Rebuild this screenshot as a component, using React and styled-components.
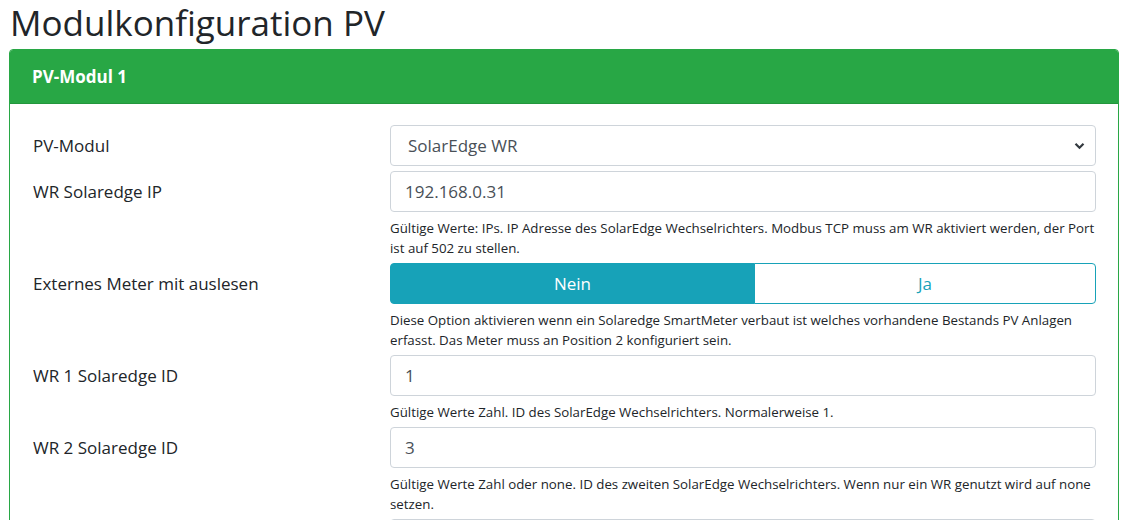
import React, { useState } from 'react'
import styled, { createGlobalStyle } from 'styled-components'

const GlobalStyle = createGlobalStyle`
    html, body {
        margin: 0;
        padding: 0;
        background: #fff;
    }
    body {
        font-family: "Open Sans", "Noto Sans", sans-serif;
        font-size: 17px;
        color: #212529;
    }
    * {
        box-sizing: border-box;
    }
`

const Seite = styled.div`
    padding: 2px 20px 0 9px;
`
const Titel = styled.h1`
    margin: 0 0 5px 1px;
    font-size: 35px;
    font-weight: 500;
    line-height: 42px;
    color: #212529;
`
const Karte = styled.div`
    border: 1px solid #28a745;
    border-radius: 4px;
    overflow: hidden;
`
const KartenKopf = styled.div`
    background: #28a745;
    color: #fff;
    font-weight: 700;
    font-size: 17px;
    height: 54px;
    display: flex;
    align-items: center;
    padding: 0 22px;
    border-bottom: 1px solid #23963d;
`
const KartenInhalt = styled.div`
    padding: 21px 22px 0 22px;
    display: flex;
    flex-direction: column;
    gap: 5px;
`
const Zeile = styled.div`
    display: grid;
    grid-template-columns: 358px 1fr;
`
const Beschriftung = styled.label`
    padding-top: 9px;
    line-height: 24px;
    padding-left: 1px;
`
const Feld = styled.div`
    display: flex;
    flex-direction: column;
`
const Eingabe = styled.input`
    height: 41px;
    width: 100%;
    border: 1px solid #ced4da;
    border-radius: 4px;
    padding: 0 14px;
    font-family: inherit;
    font-size: 17px;
    color: #495057;
    outline: none;
`
const AuswahlBox = styled.div`
    position: relative;
    height: 41px;
    border: 1px solid #ced4da;
    border-radius: 4px;
    display: flex;
    align-items: center;
    padding: 0 17px;
    color: #495057;

    svg {
        position: absolute;
        right: 10px;
        top: 16px;
    }
`
const Hilfe = styled.div`
    margin-top: 6px;
    font-size: 13.3px;
    line-height: 20px;
`
const Schalter = styled.div`
    display: flex;
    height: 41px;
`
const SchalterKnopf = styled.button`
    flex: 1 1 auto;
    font-family: inherit;
    font-size: 17px;
    cursor: pointer;
    border: 1px solid #17a2b8;
    background: ${p => (p.$aktiv ? '#17a2b8' : '#fff')};
    color: ${p => (p.$aktiv ? '#fff' : '#17a2b8')};
    border-radius: ${p => (p.$links ? '4px 0 0 4px' : '0 4px 4px 0')};
    ${p => (p.$links ? '' : 'margin-left: -1px;')}
`

const Chevron = () => (
    <svg width="11" height="8" viewBox="0 0 11 8">
        <path d="M1.5 1.8L5.5 5.8L9.5 1.8" fill="none" stroke="#343a40" strokeWidth="2.2" />
    </svg>
)

const App = () => {
    const [externesMeter, setExternesMeter] = useState(false)

    return (
        <Seite>
            <GlobalStyle />
            <Titel>Modulkonfiguration PV</Titel>
            <Karte>
                <KartenKopf>PV-Modul 1</KartenKopf>
                <KartenInhalt>
                    <Zeile>
                        <Beschriftung>PV-Modul</Beschriftung>
                        <Feld>
                            <AuswahlBox>
                                SolarEdge WR
                                <Chevron />
                            </AuswahlBox>
                        </Feld>
                    </Zeile>
                    <Zeile>
                        <Beschriftung>WR Solaredge IP</Beschriftung>
                        <Feld>
                            <Eingabe defaultValue="192.168.0.31" />
                            <Hilfe>Gültige Werte: IPs. IP Adresse des SolarEdge Wechselrichters. Modbus TCP muss am WR aktiviert werden, der Port ist auf 502 zu stellen.</Hilfe>
                        </Feld>
                    </Zeile>
                    <Zeile>
                        <Beschriftung>Externes Meter mit auslesen</Beschriftung>
                        <Feld>
                            <Schalter>
                                <SchalterKnopf $links $aktiv={!externesMeter} onClick={() => setExternesMeter(false)}>Nein</SchalterKnopf>
                                <SchalterKnopf $aktiv={externesMeter} onClick={() => setExternesMeter(true)}>Ja</SchalterKnopf>
                            </Schalter>
                            <Hilfe>Diese Option aktivieren wenn ein Solaredge SmartMeter verbaut ist welches vorhandene Bestands PV Anlagen erfasst. Das Meter muss an Position 2 konfiguriert sein.</Hilfe>
                        </Feld>
                    </Zeile>
                    <Zeile>
                        <Beschriftung>WR 1 Solaredge ID</Beschriftung>
                        <Feld>
                            <Eingabe defaultValue="1" />
                            <Hilfe>Gültige Werte Zahl. ID des SolarEdge Wechselrichters. Normalerweise 1.</Hilfe>
                        </Feld>
                    </Zeile>
                    <Zeile>
                        <Beschriftung>WR 2 Solaredge ID</Beschriftung>
                        <Feld>
                            <Eingabe defaultValue="3" />
                            <Hilfe>Gültige Werte Zahl oder none. ID des zweiten SolarEdge Wechselrichters. Wenn nur ein WR genutzt wird auf none setzen.</Hilfe>
                        </Feld>
                    </Zeile>
                    <Zeile>
                        <Beschriftung />
                        <Feld>
                            <Eingabe defaultValue="" />
                        </Feld>
                    </Zeile>
                </KartenInhalt>
            </Karte>
        </Seite>
    )
}

export default App
